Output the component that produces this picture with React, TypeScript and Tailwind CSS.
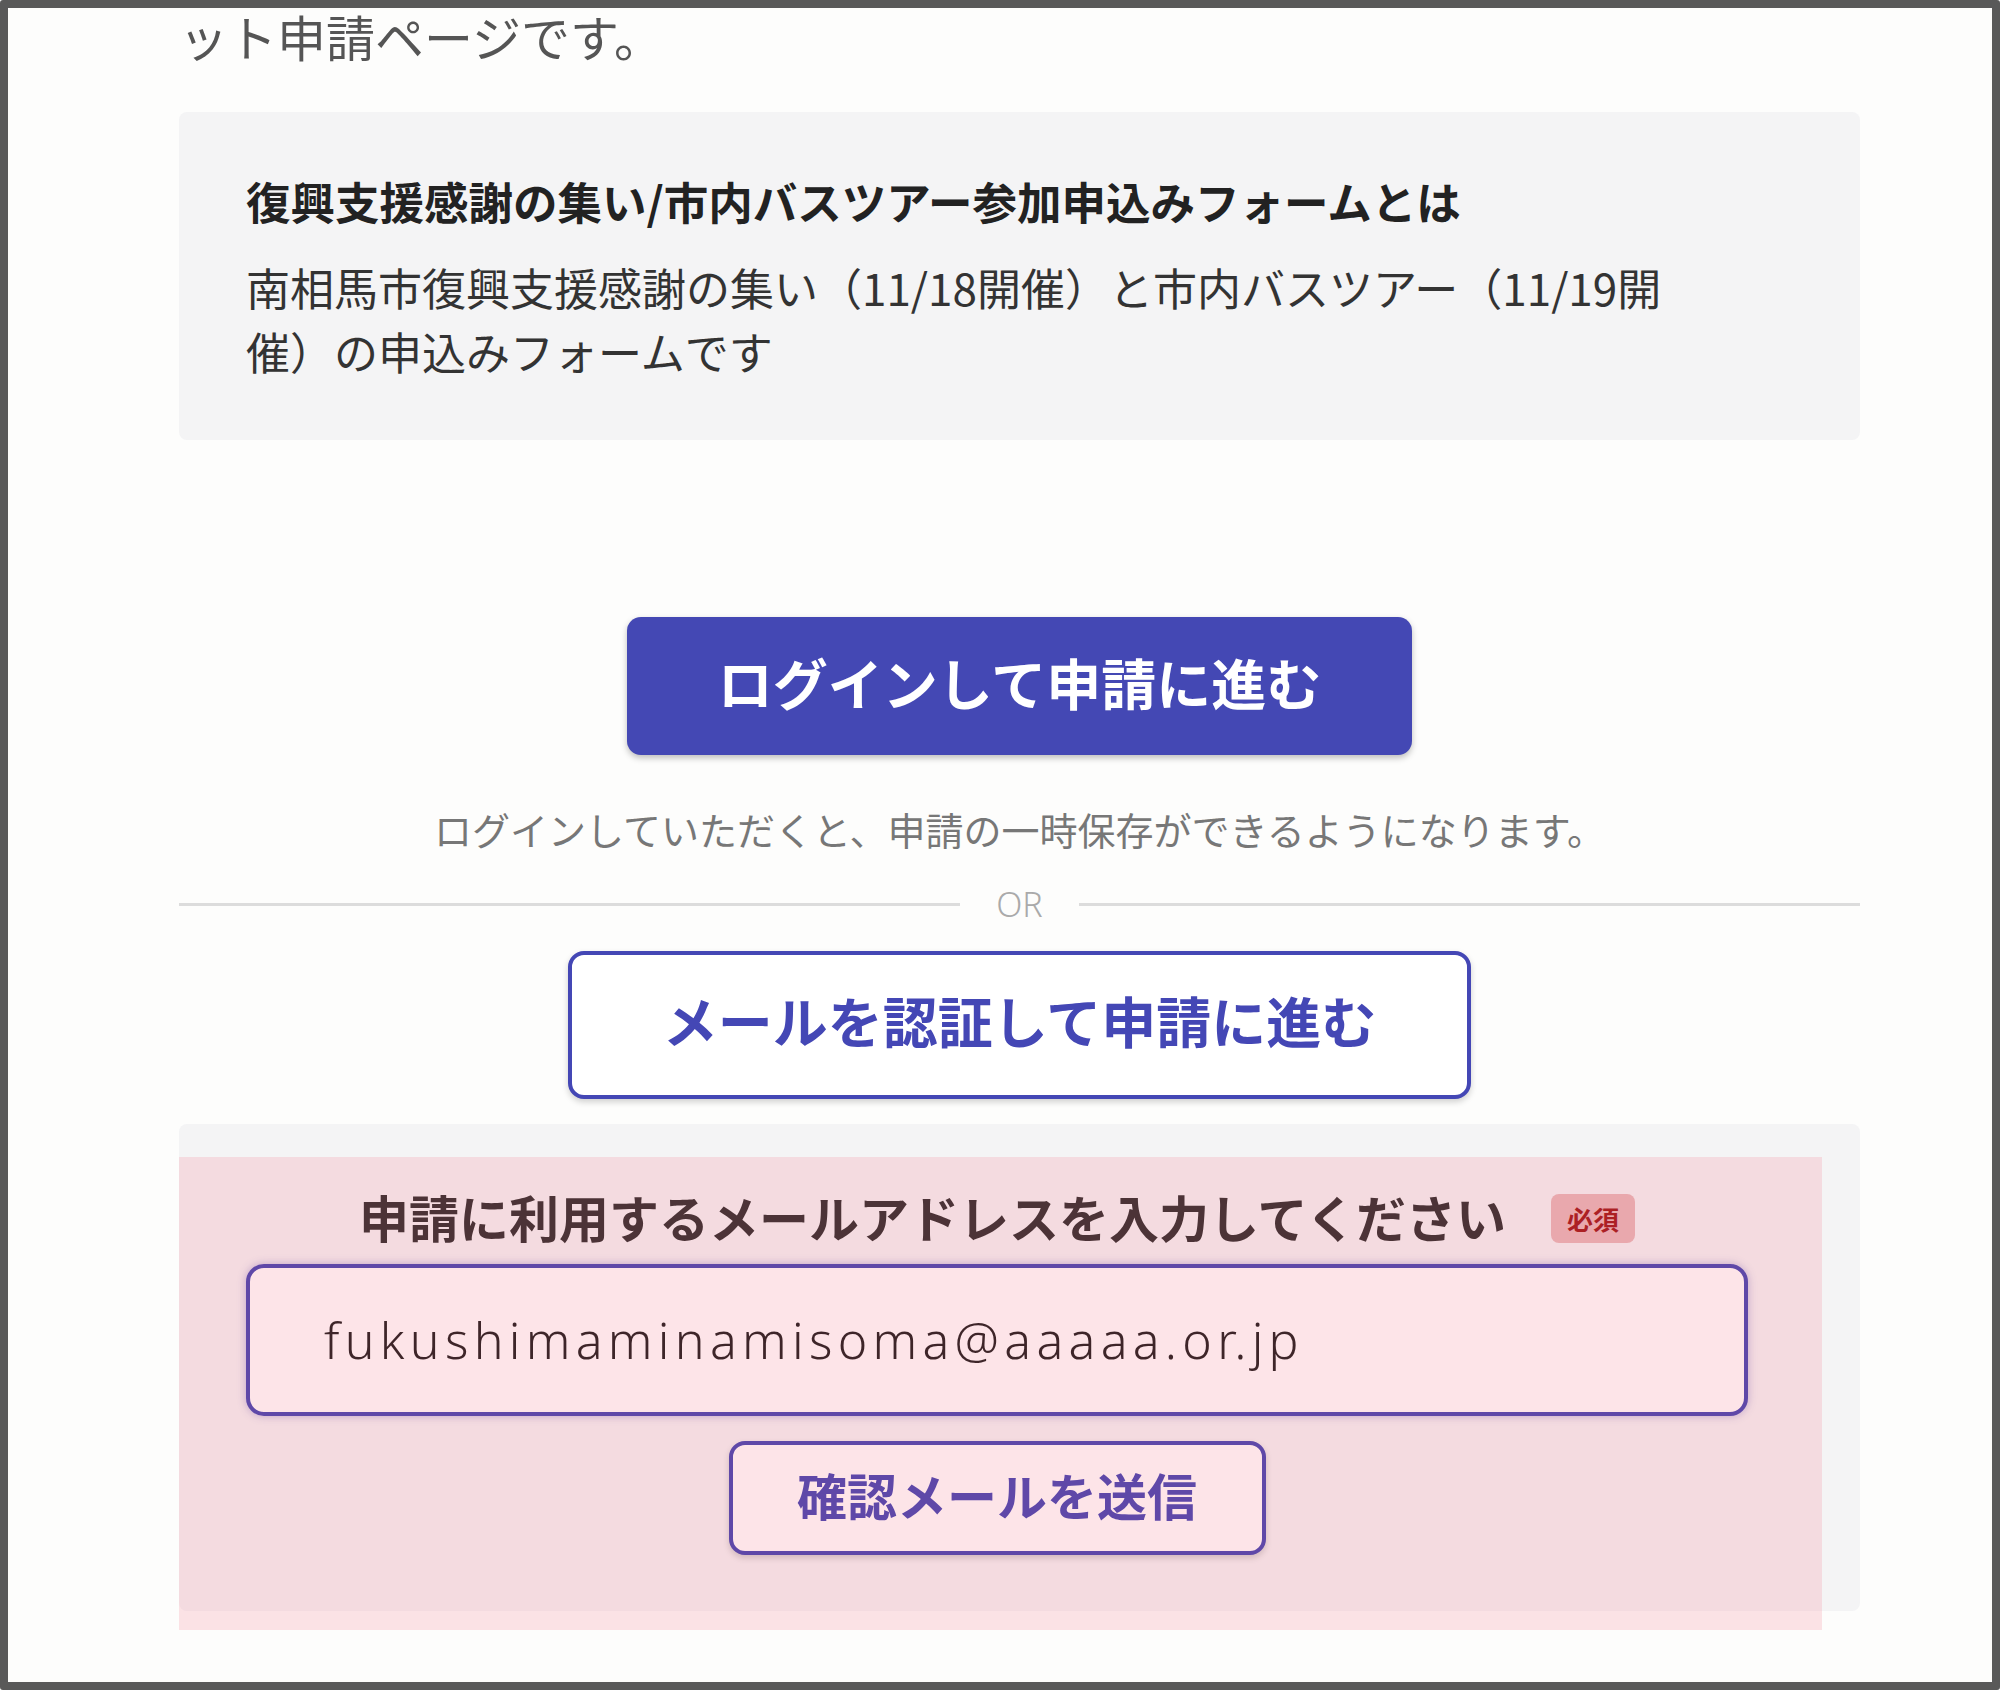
import React from 'react';

const jp = "font-['Noto_Sans_CJK_JP','Noto_Sans',sans-serif]";

function OrDivider() {
  return (
    <div className="mt-[29px] flex h-[40px] w-full items-center">
      <div className="h-[3px] flex-1 bg-[#dcdcdc]" />
      <span className="px-[36px] font-['Noto_Sans',sans-serif] text-[34px] font-light leading-[40px] text-[#aaaaaa]">
        OR
      </span>
      <div className="h-[3px] flex-1 bg-[#dcdcdc]" />
    </div>
  );
}

function EmailForm() {
  return (
    <div className="relative mt-[25px] w-full">
      <div className="flex flex-col rounded-[8px] bg-[#f4f4f5] pb-[56px] pl-[67px] pr-[112px] pt-[57px]">
        {/* label + required badge */}
        <div className="flex items-center justify-center gap-[45px]">
          <span className="pb-[4px] text-[50px] font-bold leading-[70px] text-[#222]">
            申請に利用するメールアドレスを入力してください
          </span>
          <span className="flex h-[49px] w-[84px] items-center justify-center rounded-[8px] bg-[#e6b5b6] text-[26px] font-bold text-[#9a0a0a]">
            必須
          </span>
        </div>

        <input
          type="email"
          readOnly
          defaultValue="fukushimaminamisoma@aaaaa.or.jp"
          className="mt-[9px] h-[152px] w-full rounded-[18px] border-[4px] border-[#3a3cb0] bg-white pl-[74px] font-['Noto_Sans',sans-serif] text-[50px] font-light tracking-[5.3px] text-[#111] shadow-[0_0_8px_rgba(60,50,170,0.35)] outline-none"
        />

        <button className="mt-[25px] h-[114px] w-[537px] self-center rounded-[16px] border-[4px] border-[#3a3cb0] bg-white pb-[8px] text-[50px] font-bold text-[#3a3cb0] shadow-[0_3px_6px_rgba(0,0,0,0.18)]">
          確認メールを送信
        </button>
      </div>

      {/* pink highlight laid over the form item */}
      <div className="pointer-events-none absolute bottom-[-19px] left-0 top-[33px] w-[1643px] bg-[rgba(245,120,140,0.2)]" />
    </div>
  );
}

export default function App() {
  return (
    <div className={`h-[1690px] w-[2000px] overflow-hidden rounded-[3px] border-[8px] border-[#595959] bg-[#fdfdfc] ${jp}`}>
      <div className="ml-[171px] w-[1681px]">
        <p className="text-[49px] leading-[55px] text-[#555]">ット申請ページです。</p>

        {/* description */}
        <div className="mt-[49px] rounded-[8px] bg-[#f4f4f5] pb-[57px] pl-[67px] pt-[56px]">
          <h2 className="text-[44.5px] font-bold leading-[66px] text-[#222]">
            復興支援感謝の集い/市内バスツアー参加申込みフォームとは
          </h2>
          <p className="mt-[21px] max-w-[1450px] text-[44px] leading-[64px] text-[#333]">
            南相馬市復興支援感謝の集い（11/18開催）と市内バスツアー（11/19開催）の申込みフォームです
          </p>
        </div>

        <div className="flex flex-col items-center">
          <button className="mt-[177px] h-[138px] w-[785px] rounded-[14px] bg-[#4448b4] pb-[10px] text-[55px] font-bold text-white shadow-[0_3px_6px_rgba(0,0,0,0.25)]">
            ログインして申請に進む
          </button>
          <p className="mt-[48px] text-[38px] leading-[52px] text-[#777]">
            ログインしていただくと、申請の一時保存ができるようになります。
          </p>

          <OrDivider />

          <button className="mt-[27px] h-[148px] w-[903px] rounded-[16px] border-[4px] border-[#4447b5] bg-white pb-[12px] text-[55px] font-bold text-[#4447b5] shadow-[0_3px_6px_rgba(0,0,0,0.18)]">
            メールを認証して申請に進む
          </button>

          <EmailForm />
        </div>
      </div>
    </div>
  );
}
